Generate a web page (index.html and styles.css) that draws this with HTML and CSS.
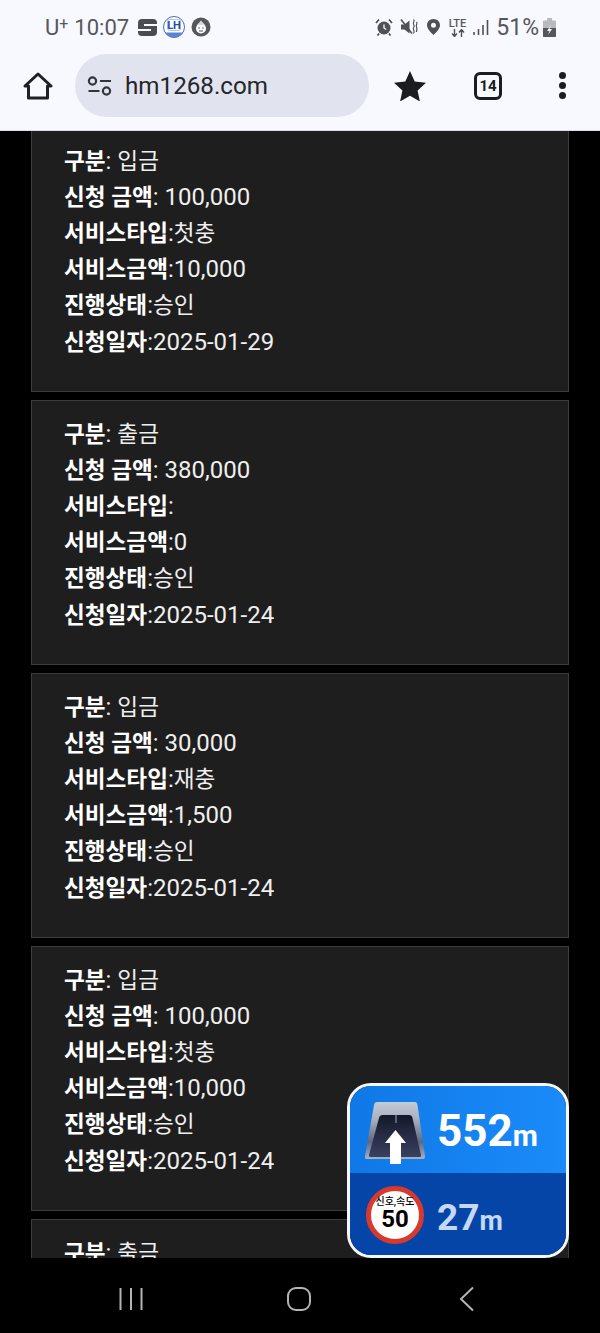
FILE: index.html
```html
<!DOCTYPE html>
<html lang="ko">
  <head>
    <meta charset="UTF-8" />
    <meta name="viewport" content="width=device-width, initial-scale=1" />
    <title>hm1268.com</title>
    <link rel="stylesheet" href="styles.css">
  </head>
  <body>
    <div class="phone">
      <header class="chrome">
        <div class="status-bar">
          <div class="status-left">
            <span class="carrier">U<sup>+</sup></span>
            <span class="clock">10:07</span>
            <svg class="app-s" width="19" height="17" viewBox="0 0 19 17">
              <rect width="19" height="17" rx="4" fill="#4a4c50"/>
              <rect x="6" y="5" width="13" height="2" fill="#f8f9ff"/>
              <rect x="0" y="10" width="13" height="2" fill="#f8f9ff"/>
            </svg>
            <svg width="22" height="22" viewBox="0 0 22 22">
              <circle cx="11" cy="11" r="10.500" fill="#fff" stroke="#3f6fc0"/>
              <path d="M2 16.500h18A10.500 10.500 0 0 1 2 16.500z" fill="#5b86cf"/>
              <rect x="4.500" y="3.500" width="13" height="11" rx="2" fill="none" stroke="#9db8e6" stroke-width=".8"/>
              <text x="11" y="13" text-anchor="middle" class="lh-text">LH</text>
            </svg>
            <svg width="20" height="20" viewBox="0 0 20 20">
              <circle cx="10" cy="10" r="9.500" fill="#55575a"/>
              <circle cx="10" cy="11.500" r="5" fill="#fff"/>
              <path d="M6 8l4-4.500L14 8z" fill="#d9dadc"/>
              <circle cx="8" cy="11" r=".8" fill="#55575a"/>
              <circle cx="12" cy="11" r=".8" fill="#55575a"/>
              <path d="M8 14h4" stroke="#55575a"/>
            </svg>
          </div>
          <div class="status-right">
            <svg width="18" height="18" viewBox="0 0 18 18">
              <circle cx="9" cy="10" r="6.500" fill="#4f5155"/>
              <path d="M9 6.500V10l2.200 1.500" fill="none" stroke="#fff" stroke-width="1.300"/>
              <path d="M1 5l3-3.500M17 5l-3-3.500M4 15.500l-1.500 2M14 15.500l1.500 2" stroke="#4f5155" stroke-width="1.800"/>
            </svg>
            <svg width="18" height="18" viewBox="0 0 18 18">
              <path d="M1 6.500h3.500L9.500 2.500v13l-5-4H1z" fill="#4f5155"/>
              <path d="M1 1.500l11 14" stroke="#4f5155" stroke-width="1.600"/>
              <path d="M13.500 1.500c2 1.500-1 3 0 4.500s1 2.500 0 4 2 3 0 5.500M16.500 4c1.500 1.500-1 3 0 5s0 3 0 5" fill="none" stroke="#4f5155" stroke-width="1.200"/>
            </svg>
            <svg class="pin" width="15" height="18" viewBox="0 0 15 18">
              <path fill-rule="evenodd" d="M7.500 1C3.600 1 1 3.800 1 7.200 1 11.500 7.500 17 7.500 17S14 11.500 14 7.200C14 3.800 11.400 1 7.500 1zm0 3.800a2.500 2.500 0 1 1 0 5 2.500 2.500 0 0 1 0-5z" fill="#4f5155"/>
            </svg>
            <div class="lte">
              <span class="lte-label">LTE</span>
              <svg width="16" height="8" viewBox="0 0 16 8">
                <path d="M4.500 0v7M2 4.500L4.500 7.500 7 4.500M11.500 8V1M9 3.500L11.500.5 14 3.500" fill="none" stroke="#4f5155" stroke-width="1.400"/>
              </svg>
            </div>
            <svg width="16" height="17" viewBox="0 0 16 17">
              <path d="M1 13v3M5.500 10v6M10 6v10M14.500 1v15" stroke="#4f5155" stroke-width="1.600"/>
            </svg>
            <span class="battery-text">51%</span>
            <svg width="13" height="19" viewBox="0 0 13 19">
              <path d="M4 0h5v2.500h3a1 1 0 0 1 1 1V18a1 1 0 0 1-1 1H1a1 1 0 0 1-1-1V3.500a1 1 0 0 1 1-1h3z" fill="#b9babd"/>
              <path d="M0 10h13v8a1 1 0 0 1-1 1H1a1 1 0 0 1-1-1z" fill="#55575a"/>
              <path d="M8 7l-4 6h2.500L5 17l4-6H6.500z" fill="#f8f9ff"/>
            </svg>
          </div>
        </div>

        <div class="toolbar">
          <div class="tool-cell cell-home">
            <svg width="30" height="28" viewBox="0 0 30 28">
              <path d="M2 14L15 2l13 12h-3.500v12h-19V14z" fill="none" stroke="#1f2023" stroke-width="3" stroke-linejoin="round"/>
            </svg>
          </div>
          <div class="url-pill">
            <svg width="26" height="20" viewBox="0 0 26 20">
              <circle cx="5.500" cy="5" r="3.600" fill="none" stroke="#33353a" stroke-width="2.200"/>
              <path d="M13 5h11M1.500 15h11" stroke="#33353a" stroke-width="2.200"/>
              <circle cx="19.500" cy="15" r="3.600" fill="none" stroke="#33353a" stroke-width="2.200"/>
            </svg>
            <span class="url-text">hm1268.com</span>
          </div>
          <div class="tool-cell cell-star">
            <svg width="32" height="30" viewBox="0 0 32 30">
              <path d="M16 0l4.700 10.500 11.300 1.200-8.400 7.700 2.300 11.100L16 24.800 6.100 30.500l2.300-11.100L0 11.700l11.300-1.200z" fill="#1b1c20"/>
            </svg>
          </div>
          <div class="tool-cell cell-tabs">
            <div class="tab-count">14</div>
          </div>
          <div class="tool-cell cell-menu">
            <span class="dot"></span>
            <span class="dot"></span>
            <span class="dot"></span>
          </div>
        </div>
      </header>

      <main class="content">
        <div class="card-list">
          <section class="card">
            <p><b>구분</b>: <span class="ko">입금</span></p>
            <p><b>신청 금액</b>: 100,000</p>
            <p><b>서비스타입</b>:<span class="ko">첫충</span></p>
            <p><b>서비스금액</b>:10,000</p>
            <p><b>진행상태</b>:<span class="ko">승인</span></p>
            <p><b>신청일자</b>:2025-01-29</p>
          </section>
          <section class="card">
            <p><b>구분</b>: <span class="ko">출금</span></p>
            <p><b>신청 금액</b>: 380,000</p>
            <p><b>서비스타입</b>:</p>
            <p><b>서비스금액</b>:0</p>
            <p><b>진행상태</b>:<span class="ko">승인</span></p>
            <p><b>신청일자</b>:2025-01-24</p>
          </section>
          <section class="card">
            <p><b>구분</b>: <span class="ko">입금</span></p>
            <p><b>신청 금액</b>: 30,000</p>
            <p><b>서비스타입</b>:<span class="ko">재충</span></p>
            <p><b>서비스금액</b>:1,500</p>
            <p><b>진행상태</b>:<span class="ko">승인</span></p>
            <p><b>신청일자</b>:2025-01-24</p>
          </section>
          <section class="card">
            <p><b>구분</b>: <span class="ko">입금</span></p>
            <p><b>신청 금액</b>: 100,000</p>
            <p><b>서비스타입</b>:<span class="ko">첫충</span></p>
            <p><b>서비스금액</b>:10,000</p>
            <p><b>진행상태</b>:<span class="ko">승인</span></p>
            <p><b>신청일자</b>:2025-01-24</p>
          </section>
          <section class="card">
            <p><b>구분</b>: <span class="ko">출금</span></p>
          </section>
        </div>

        <!-- navigation overlay from another app -->
        <div class="nav-widget">
          <div class="widget-top">
            <svg class="tunnel" width="61" height="62" viewBox="0 0 61 62">
              <defs>
                <linearGradient id="roof" x1="0" y1="0" x2="0" y2="1">
                  <stop offset="0" stop-color="#c4cad6"/>
                  <stop offset=".3" stop-color="#a9b0c0"/>
                  <stop offset=".7" stop-color="#5d6880"/>
                  <stop offset="1" stop-color="#a4b2c8"/>
                </linearGradient>
                <linearGradient id="road" x1="0" y1="0" x2="0" y2="1">
                  <stop offset="0" stop-color="#14182a"/>
                  <stop offset="1" stop-color="#3a4160"/>
                </linearGradient>
              </defs>
              <path d="M12 0h38q2 0 2.500 3L60 54q.5 3-2 3H2q-2.500 0-2-3L9 3q.5-3 3-3z" fill="url(#roof)"/>
              <path d="M18 13h26q3 0 3.500 3L56 53q.5 2-2 2H6q-2.500 0-2-2L14 16q.5-3 4-3z" fill="url(#road)"/>
              <path d="M30 13h2v8h-2z" fill="#5b6278"/>
              <path d="M30.500 28L41 41h-5v21H25V41h-5z" fill="#fff"/>
            </svg>
            <div class="distance-main">552<span class="unit-main">m</span></div>
          </div>
          <div class="widget-bottom">
            <div class="speed-sign">
              <span class="sign-label">신호,속도</span>
              <span class="sign-speed">50</span>
            </div>
            <div class="distance-next">27<span class="unit-next">m</span></div>
          </div>
        </div>
      </main>

      <footer class="nav-bar">
        <svg width="26" height="24" viewBox="0 0 26 24">
          <path d="M2.500 1v22M13 1v22M23.500 1v22" stroke="#b4b4b4" stroke-width="2"/>
        </svg>
        <svg width="24" height="24" viewBox="0 0 24 24">
          <rect x="1" y="1" width="22" height="22" rx="8" fill="none" stroke="#b4b4b4" stroke-width="2"/>
        </svg>
        <svg width="16" height="26" viewBox="0 0 16 26">
          <path d="M14 1.500L2 13l12 11.500" fill="none" stroke="#b4b4b4" stroke-width="2"/>
        </svg>
      </footer>
    </div>
  </body>
</html>
```

FILE: styles.css
```css
body {
  margin: 0;
  background: #000;
  font-family: Roboto, "Noto Sans CJK KR", sans-serif;
}
.phone {
  width: 600px;
  height: 1333px;
  display: flex;
  flex-direction: column;
  overflow: hidden;
}

/* Browser chrome */
.chrome {
  background: #f8f9ff;
  border-bottom: 1px solid #dcdde2;
  flex: none;
}
.status-bar {
  height: 54px;
  padding: 0 44px 0 45px;
  display: flex;
  justify-content: space-between;
  align-items: center;
  box-sizing: border-box;
  color: #55575b;
  font-size: 22px;
}
.status-left,
.status-right {
  display: flex;
  align-items: center;
}
.status-left {
  gap: 6px;
}
.status-right {
  gap: 7px;
}
.carrier sup {
  font-size: 16px;
  line-height: 0;
  vertical-align: 6px;
}
.app-s {
  margin-left: 3px;
}
.lh-text {
  font: 700 11px Roboto, sans-serif;
  fill: #1f4ea8;
}
.pin,
.lte {
  margin-left: 1px;
}
.lte {
  display: flex;
  flex-direction: column;
  align-items: center;
}
.lte-label {
  font-size: 11px;
  line-height: 11px;
  font-weight: 500;
}
.battery-text {
  font-size: 23px;
  margin-right: -3px;
}
.toolbar {
  height: 76px;
  padding-bottom: 13px;
  box-sizing: border-box;
  display: flex;
}
.tool-cell {
  display: flex;
  align-items: center;
  justify-content: center;
}
.cell-home {
  width: 75px;
}
.cell-star {
  width: 81px;
}
.cell-tabs {
  width: 76px;
}
.cell-menu {
  width: 72px;
  flex-direction: column;
  gap: 3px;
}
.url-pill {
  width: 294px;
  background: #e1e4ee;
  border-radius: 32px;
  display: flex;
  align-items: center;
  gap: 12px;
  padding-left: 12px;
  box-sizing: border-box;
}
.url-text {
  color: #24262b;
  font-size: 24.2px;
}
.tab-count {
  width: 28px;
  height: 28px;
  box-sizing: border-box;
  border: 3px solid #1b1c20;
  border-radius: 6px;
  color: #1b1c20;
  font-size: 15px;
  font-weight: 700;
  line-height: 22px;
  text-align: center;
}
.dot {
  width: 7px;
  height: 7px;
  border-radius: 50%;
  background: #1b1c20;
}

/* Page content */
.content {
  flex: 1;
  position: relative;
  overflow: hidden;
  background: #000;
}
.card-list {
  margin-top: -4px;
  padding: 0 31px;
  display: flex;
  flex-direction: column;
  gap: 8px;
}
.card {
  height: 265px;
  box-sizing: border-box;
  flex: none;
  background: #1e1e1e;
  border: 1px solid #3c3c3c;
  padding: 14.6px 32px 0;
  color: #efefef;
  font-size: 24px;
}
.card p {
  margin: 0;
  line-height: 36.2px;
}
.card b,
.ko {
  font-size: 22.6px;
  line-height: 1;
}
.card b {
  color: #fff;
  font-weight: 700;
}

/* Navigation overlay */
.nav-widget {
  position: absolute;
  right: 31px;
  bottom: 0;
  width: 222px;
  height: 175px;
  box-sizing: border-box;
  border: 3px solid #f4f7fc;
  border-radius: 24px;
  overflow: hidden;
  display: flex;
  flex-direction: column;
  color: #fff;
  font-weight: 700;
}
.widget-top {
  height: 87px;
  flex: none;
  background: linear-gradient(90deg, #0f78e6, #1b8bfa);
  display: flex;
  gap: 11px;
  padding: 16px 0 0 15px;
  box-sizing: border-box;
}
.widget-bottom {
  flex: 1;
  background: #0645a8;
  display: flex;
  align-items: center;
  gap: 13px;
  padding: 2px 0 0 16px;
}
.distance-main {
  font-size: 44px;
  line-height: 52px;
  margin-top: 3px;
}
.unit-main {
  font-size: 29px;
}
.distance-next {
  font-size: 37px;
  color: #c5d8f5;
  margin-top: 4px;
}
.unit-next {
  font-size: 27px;
}
.speed-sign {
  width: 58px;
  height: 58px;
  box-sizing: border-box;
  border: 5px solid #d9392c;
  border-radius: 50%;
  background: #fff;
  color: #000;
  display: flex;
  flex-direction: column;
  align-items: center;
  justify-content: center;
  padding-bottom: 3px;
}
.sign-label {
  font-size: 10px;
  line-height: 11px;
  font-weight: 500;
  white-space: nowrap;
}
.sign-speed {
  font-size: 24px;
  line-height: 24px;
}

/* System nav bar */
.nav-bar {
  height: 75px;
  flex: none;
  background: #000;
  box-sizing: border-box;
  padding: 6px 0 0 47px;
  display: grid;
  grid-template-columns: repeat(3, 168px);
  justify-items: center;
  align-items: center;
}
```
